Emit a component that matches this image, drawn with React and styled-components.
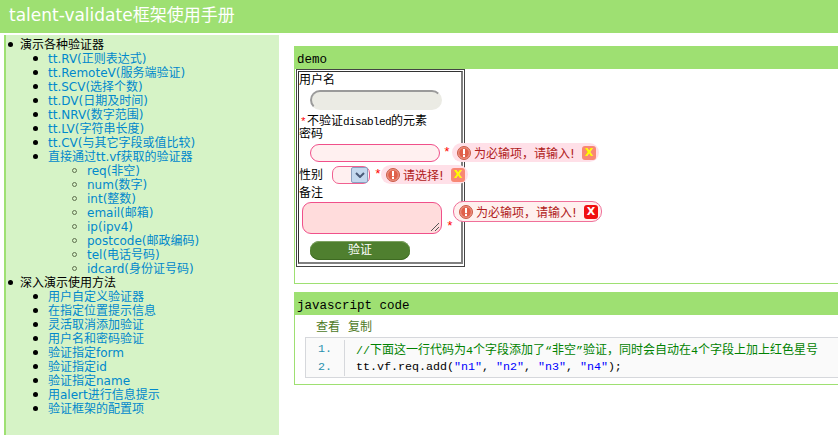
import React from 'react';
import styled, { createGlobalStyle } from 'styled-components';

const Global = createGlobalStyle`
  html, body { margin: 0; padding: 0; background: #fff; overflow: hidden; }
  body { font-family: "DejaVu Sans", "Noto Sans CJK SC", sans-serif; font-size: 12px; color: #000; }
`;
const Page = styled.div`width: 838px; height: 435px; overflow: hidden; display: flex; flex-direction: column;`;
const Header = styled.header`
  height: 33px; background: #9ee072; color: #fff; font-size: 17px; line-height: 30px; padding-left: 9px; flex: none; margin-bottom: 2px;
`;
const Body = styled.div`flex: 1; display: flex; min-height: 0;`;
const Sidebar = styled.nav`
  width: 273px; margin-left: 4px; background: #d6f3c6; border-left: 2px solid #9ee072; flex: none; padding-top: 3px;
`;
const Top = styled.ul`list-style: none; margin: 0; padding: 0 0 0 14px; line-height: 14px;`;
const Sub = styled.ul`list-style: none; margin: 0; padding: 0 0 0 28px;`;
const Sub3 = styled.ul`list-style: none; margin: 0; padding: 0 0 0 39px;`;
const TopItem = styled.li`
  position: relative;
  &::before { content: ""; position: absolute; left: -12px; top: 4px; width: 5px; height: 5px; border-radius: 50%; background: #000; }
`;
const SubItem = styled.li`
  position: relative;
  &::before { content: ""; position: absolute; left: -15px; top: 4px; width: 5px; height: 5px; border-radius: 50%; background: #000; }
`;
const LeafItem = styled.li`
  position: relative;
  &::before { content: ""; position: absolute; left: -15px; top: 4px; width: 5px; height: 5px; box-sizing: border-box; border-radius: 50%; border: 1.5px solid #5f6f4f; }
`;
const L = styled.a`color: #0088cc; text-decoration: none;`;
const Main = styled.main`flex: 1; min-width: 0; padding: 11px 0 0 15px; display: flex; flex-direction: column; gap: 8px;`;
const Panel = styled.section`border: 1px solid #9ee072; border-right: 0; border-top: 0; display: flex; flex-direction: column;`;
const Title = styled.h3`
  margin: 0 0 0 -1px; height: 23px; background: #9ee072; font-family: "Liberation Mono", "Noto Sans CJK SC", monospace; font-weight: 400; font-size: 12.5px; line-height: 29px; padding-left: 3px; overflow: hidden;
`;
const FormBox = styled.div`
  box-sizing: border-box; width: 169px; height: 198px; margin: 0 0 16px 1px; border: 1px solid #444; padding: 1px 1px 2px 1px;
`;
const FormCell = styled.div`
  height: 100%; box-sizing: border-box; border: solid #333; border-width: 1px 2px 2px 1px; border-right-color: #808080; border-bottom-color: #808080;
  padding-top: 1px; display: flex; flex-direction: column;
`;
const Caption = styled.div`height: 14px; line-height: 14px; flex: none; margin-top: ${p => p.$mt || 0}px;`;
const Row = styled.div`
  position: relative; display: flex; align-items: center; padding-left: ${p => p.$pl || 0}px; margin-top: ${p => p.$mt || 0}px; height: ${p => p.$h}px; flex: none;
`;
const DisabledField = styled.div`
  box-sizing: border-box; width: 132px; height: 20px; border-radius: 10px; background: #ebebe4; border: 2px solid; border-color: #9a9a9a #ebebe4 #ebebe4 #9a9a9a;
`;
const TextField = styled.div`
  box-sizing: border-box; width: 130px; height: 18px; border-radius: 9px; background: #fff0f0; border: 1px solid #f0508a; flex: none;
`;
const TextArea = styled.div`
  position: relative; box-sizing: border-box; width: 140px; height: 32px; border-radius: 9px; background: #ffdcdc; border: 1px solid #f0508a; flex: none;
`;
const Grip = styled.svg`position: absolute; right: 1px; bottom: 1px;`;
const Star = styled.span`
  color: #f00; font-family: "Liberation Mono", monospace; font-size: 13px; line-height: 14px; margin-left: ${p => p.$ml || 3}px; align-self: ${p => p.$end ? 'flex-end' : 'center'};
`;
const Note = styled.div`
  height: 14px; line-height: 14px; margin: 3px 0 0 1px; font-family: "Liberation Mono", "Noto Sans CJK SC", monospace; font-size: 11px; letter-spacing: -0.6px; flex: none;
`;
const RedMark = styled.span`color: #f00; margin-right: 1px;`;
const Tip = styled.div`
  position: absolute; left: ${p => p.$left}px; top: ${p => p.$top}px; box-sizing: border-box; height: ${p => p.$h}px; width: ${p => p.$w}px;
  border-radius: 10px; background: ${p => p.$bg}; border: ${p => p.$b}; display: flex; align-items: center; padding: 0 3px 0 5px; gap: 3px;
  color: #b02020; white-space: nowrap; font-size: 12px; z-index: 2;
`;
const TipText = styled.span`flex: 1;`;
const Close = styled.span`
  width: 14px; height: 14px; border-radius: 3px; background: ${p => p.$bg}; color: ${p => p.$c}; font: 700 11px/14px "DejaVu Sans", sans-serif; text-align: center; flex: none;
`;
const Btn = styled.button`
  display: block; flex: none; width: 100px; height: 19px; margin: 7px 0 0 11px; border: 0; border-radius: 9px; background: #4f7f2f; color: #fff; font-size: 12px; padding: 0; font-family: inherit; line-height: 19px;
  box-shadow: inset 0 1px 0 #7ea262, inset 0 -1px 0 #3e6a22;
`;
const Select = styled.div`
  box-sizing: border-box; width: 38px; height: 18px; border: 1px solid #f06090; border-radius: 7px; background: #fff0f0; display: flex; justify-content: flex-end; padding-right: 1px; margin-left: 9px;
`;
const Arrow = styled.span`
  width: 17px; height: 16px; border: 1px solid #8aa0c0; box-sizing: border-box; border-radius: 2px; background: #c4d8ee; display: flex; align-items: center; justify-content: center;
`;
const Links = styled.div`padding: 5px 0 0 21px; height: 14px; line-height: 14px; color: #4d7a1f; display: flex; gap: 8px;`;
const CodeBox = styled.div`
  margin: 3px 0 6px 10px; border: 1px solid #d6d8dc; border-right: 0; background: #fafafa; padding: 2px 0 1px; font-size: 12px; line-height: 18px; display: flex; flex-direction: column;
`;
const CodeLine = styled.div`display: flex; height: 18px;`;
const Gutter = styled.span`
  width: 39px; margin-right: 11px; padding-right: 12px; box-sizing: border-box; text-align: right; color: #2b91af; border-right: 1px solid #d6d8dc; font-family: "Liberation Mono", monospace; font-size: 11.67px; flex: none;
`;
const Code = styled.code`
  font-family: "Liberation Mono", "Noto Sans CJK SC", monospace; font-size: 11.67px; color: ${p => p.$c || '#000'}; white-space: nowrap;
`;
const Cjk = styled.span`font-family: "Noto Sans CJK SC", sans-serif; font-size: 12px; letter-spacing: 0;`;
const Str = styled.span`color: #0000ff;`;

function Warn() {
  return (
    <svg width="14" height="14" viewBox="0 0 14 14">
      <circle cx="7" cy="7" r="6.5" fill="#eb9080" stroke="#c85c48" strokeWidth="1" />
      <circle cx="7" cy="7" r="4.8" fill="#e0604a" />
      <rect x="6" y="3" width="2" height="5.2" fill="#fff" />
      <rect x="6" y="9" width="2" height="2" fill="#fff" />
    </svg>
  );
}

const group1 = ['tt.RV(正则表达式)', 'tt.RemoteV(服务端验证)', 'tt.SCV(选择个数)', 'tt.DV(日期及时间)', 'tt.NRV(数字范围)', 'tt.LV(字符串长度)', 'tt.CV(与其它字段或值比较)'];
const group2 = ['req(非空)', 'num(数字)', 'int(整数)', 'email(邮箱)', 'ip(ipv4)', 'postcode(邮政编码)', 'tel(电话号码)', 'idcard(身份证号码)'];
const group3 = ['用户自定义验证器', '在指定位置提示信息', '灵活取消添加验证', '用户名和密码验证', '验证指定form', '验证指定id', '验证指定name', '用alert进行信息提示', '验证框架的配置项'];

export default function App() {
  return (
    <Page>
      <Global />
      <Header>talent-validate框架使用手册</Header>
      <Body>
        <Sidebar>
          <Top>
            <TopItem>演示各种验证器
              <Sub>
                {group1.map(t => <SubItem key={t}><L>{t}</L></SubItem>)}
                <SubItem><L>直接通过tt.vf获取的验证器</L>
                  <Sub3>{group2.map(t => <LeafItem key={t}><L>{t}</L></LeafItem>)}</Sub3>
                </SubItem>
              </Sub>
            </TopItem>
            <TopItem>深入演示使用方法
              <Sub>{group3.map(t => <SubItem key={t}><L>{t}</L></SubItem>)}</Sub>
            </TopItem>
          </Top>
        </Sidebar>
        <Main>
          <Panel>
            <Title>demo</Title>
            <FormBox>
              <FormCell>
                <Caption>用户名</Caption>
                <Row $pl={11} $mt={3} $h={20}>
                  <DisabledField />
                </Row>
                <Note><RedMark>*</RedMark><Cjk>不验证</Cjk>disabled<Cjk>的元素</Cjk></Note>
                <Caption>密码</Caption>
                <Row $pl={11} $mt={3} $h={18}>
                  <TextField />
                  <Star>*</Star>
                  <Tip $left={153} $top={-1} $w={147} $h={19} $bg="#ffe0e8" $b="0"><Warn /><TipText>为必输项，请输入!</TipText><Close $bg="#f88874" $c="#ffff00">X</Close></Tip>
                </Row>
                <Row $mt={3} $h={20}>
                  <Caption>性别</Caption>
                  <Select><Arrow><svg width="10" height="6" viewBox="0 0 10 6"><path d="M1 1l4 4 4-4" fill="none" stroke="#4a5a78" strokeWidth="2" /></svg></Arrow></Select>
                  <Star $ml={4}>*</Star>
                  <Tip $left={82} $top={0} $w={87} $h={19} $bg="#ffe0e8" $b="0"><Warn /><TipText>请选择!</TipText><Close $bg="#f88874" $c="#ffff00">X</Close></Tip>
                </Row>
                <Caption $mt={1}>备注</Caption>
                <Row $pl={3} $mt={2} $h={32}>
                  <TextArea>
                    <Grip width="10" height="10" viewBox="0 0 10 10"><path d="M1 9l8-8M5 9l4-4" stroke="#555" strokeWidth="1" /></Grip>
                  </TextArea>
                  <Star $ml={4} $end>*</Star>
                  <Tip $left={154} $top={-1} $w={149} $h={21} $bg="#fff0ee" $b="1px solid #f0709a"><Warn /><TipText>为必输项，请输入!</TipText><Close $bg="#f01010" $c="#fff">X</Close></Tip>
                </Row>
                <Btn>验证</Btn>
              </FormCell>
            </FormBox>
          </Panel>
          <Panel>
            <Title>javascript code</Title>
            <Links><span>查看</span><span>复制</span></Links>
            <CodeBox>
              <CodeLine><Gutter>1.</Gutter><Code $c="#008200">//<Cjk>下面这一行代码为</Cjk>4<Cjk>个字段添加了</Cjk>“<Cjk>非空</Cjk>”<Cjk>验证，同时会自动在</Cjk>4<Cjk>个字段上加上红色星号</Cjk></Code></CodeLine>
              <CodeLine><Gutter>2.</Gutter><Code>tt.vf.req.add(<Str>"n1"</Str>, <Str>"n2"</Str>, <Str>"n3"</Str>, <Str>"n4"</Str>);</Code></CodeLine>
            </CodeBox>
          </Panel>
        </Main>
      </Body>
    </Page>
  );
}
